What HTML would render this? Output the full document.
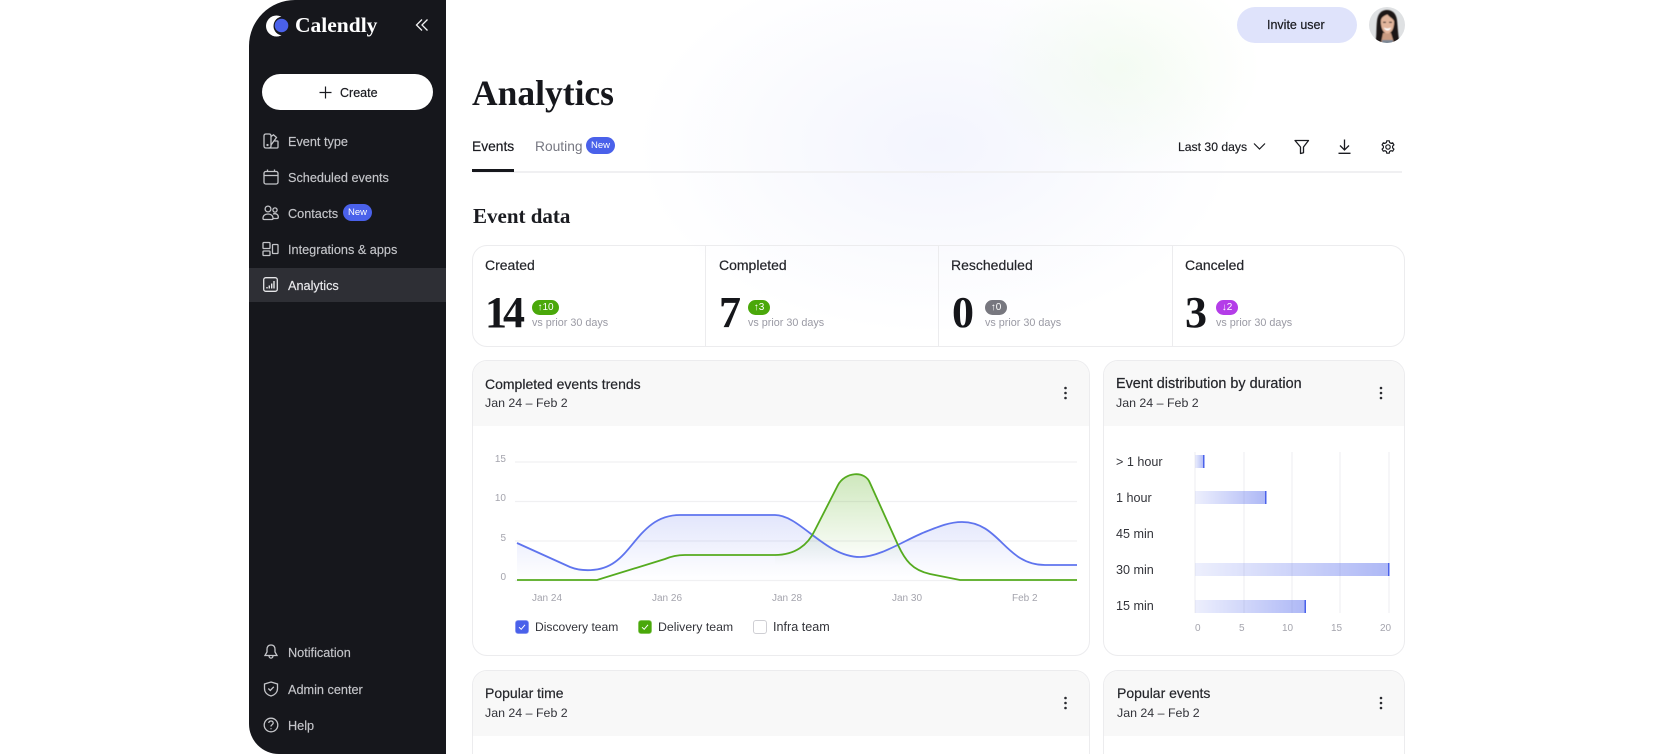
<!DOCTYPE html>
<html lang="en">
<head>
<meta charset="utf-8">
<title>Calendly Analytics</title>
<style>
html,body{margin:0;padding:0;background:#fff;width:1680px;height:754px;overflow:hidden}
#p{position:relative;width:1680px;height:754px;overflow:hidden;font-family:"Liberation Sans",sans-serif;color:#1a1b20}
.t{position:absolute;white-space:nowrap;line-height:20px;font-size:13.5px}
.s{font-family:"Liberation Serif",serif;font-weight:700}
.abs{position:absolute}
#side{position:absolute;left:249px;top:0;width:197px;height:754px;background:#16171c;border-radius:46px 0 0 30px}
.nav{color:#c4c5c9;font-size:12.7px;-webkit-text-stroke:.15px #c4c5c9;margin-top:.6px}
.badge{position:absolute;border-radius:9px;color:#fff;font-size:10px;line-height:15px;text-align:center}
.new{background:#4a61ea;height:17px;line-height:17px;width:29px}
.card{position:absolute;border:1px solid #ececee;border-radius:15px;box-sizing:border-box;background:#fff;overflow:hidden}
.head{position:absolute;left:0;right:0;top:0;height:65px;background:#f8f8f8}
.lab{font-size:14px;color:#25262b;-webkit-text-stroke:.2px #25262b}
.sub{font-size:12.8px;color:#33343a}
.ax{font-size:10px;color:#a4a4ad;margin-top:1px}
.vs{font-size:10.8px;color:#9a9aa4}
.up{height:15px}
svg{position:absolute;overflow:visible}
</style>
</head>
<body>
<div id="p">
<div class="abs" style="left:446px;top:0;width:1000px;height:754px;background:radial-gradient(ellipse 140px 105px at 675px 68px,rgba(232,249,226,.42),rgba(232,249,226,0) 100%),radial-gradient(ellipse 300px 190px at 490px 145px,rgba(232,235,252,.5),rgba(232,235,252,0) 100%)"></div>

<div id="side"></div>
<svg style="left:262px;top:12px" width="32" height="28" viewBox="0 0 32 28">
<circle cx="14.500" cy="14" r="10.500" fill="#fff"/>
<circle cx="21" cy="14" r="9.500" fill="#16171c"/>
<circle cx="19.500" cy="13.500" r="6.800" fill="#4a61ea"/>
</svg>
<span class="t s" style="left:295px;top:15px;font-size:21.500px;color:#fff;line-height:20px">Calendly</span>
<svg style="left:415px;top:18px" width="14" height="14" viewBox="0 0 14 14" fill="none" stroke="#f2f2f4" stroke-width="1.300"><path d="M7 1.500 1.500 7 7 12.500M12.500 1.500 7 7 12.500 12.500"/></svg>

<div class="abs" style="left:262px;top:74px;width:171px;height:36px;background:#fff;border-radius:18px"></div>
<svg style="left:319px;top:86px" width="13" height="13" viewBox="0 0 13 13" stroke="#1a1b20" stroke-width="1.200"><path d="M6.500 .5V12.500M.5 6.500H12.500"/></svg>
<span class="t" style="left:340px;top:83px;font-size:12.500px;-webkit-text-stroke:.2px #1a1b20">Create</span>

<svg style="left:263px;top:133px" width="16" height="16" viewBox="0 0 16 16" fill="none" stroke="#c4c5c9" stroke-width="1.300"><path d="M1 3Q1 1 3 1H6Q8 1 8 3V13Q8 15 6 15H3Q1 15 1 13Z"/><path d="M8 3.500 10.500 1.800 13.500 4.500 8 12M11.500 8H14.500Q15 8 15 9V14Q15 15 14 15H5.500"/><circle cx="4.500" cy="12" r=".5"/></svg>
<span class="t nav" style="left:288px;top:131px">Event type</span>
<svg style="left:263px;top:169px" width="16" height="16" viewBox="0 0 16 16" fill="none" stroke="#c4c5c9" stroke-width="1.300"><rect x="1" y="2.500" width="14" height="12.500" rx="1.800"/><path d="M1 6.500H15M4.500 .5V2.500M11.500 .5V2.500"/></svg>
<span class="t nav" style="left:288px;top:167px">Scheduled events</span>
<svg style="left:262px;top:205px" width="17" height="16" viewBox="0 0 17 16" fill="none" stroke="#c4c5c9" stroke-width="1.300"><circle cx="6" cy="4" r="2.900"/><circle cx="13" cy="5" r="2.100"/><path d="M1 13.500C1 10.500 3 9 6 9S11 10.500 11 13.500Q11 14.500 10 14.500H2Q1 14.500 1 13.500ZM11 9C14 8 16.300 9.500 16.300 12Q16.300 13.500 15 13.500H11.300"/></svg>
<span class="t nav" style="left:288px;top:203px">Contacts</span>
<div class="badge new" style="left:343px;top:204px;font-size:9.500px">New</div>
<svg style="left:262px;top:241px" width="17" height="16" viewBox="0 0 17 16" fill="none" stroke="#c4c5c9" stroke-width="1.300"><rect x="1" y="1.500" width="7" height="6" rx=".8"/><rect x="1" y="10" width="7" height="4.500" rx=".8"/><rect x="10.500" y="3.500" width="5.500" height="9" rx=".8"/></svg>
<span class="t nav" style="left:288px;top:239px">Integrations &amp; apps</span>
<div class="abs" style="left:249px;top:268px;width:197px;height:34px;background:#2e2f35"></div>
<svg style="left:263px;top:277px" width="15" height="15" viewBox="0 0 15 15" fill="none" stroke="#e6e6e9" stroke-width="1.300"><rect x=".7" y=".7" width="13.600" height="13.600" rx="2"/><path d="M4 11.500V10M6.300 11.500V8.500M8.700 11.500V6.500M11 11.500V4" stroke-width="1.400"/></svg>
<span class="t nav" style="left:288px;top:275px;color:#e9e9ec;-webkit-text-stroke:.15px #e9e9ec">Analytics</span>

<svg style="left:263px;top:644px" width="16" height="16" viewBox="0 0 16 16" fill="none" stroke="#c4c5c9" stroke-width="1.300"><path d="M8 1C5 1 4 3 4 5.500V8L2 11.500H14L12 8V5.500C12 3 11 1 8 1ZM6 11.500C6 15 10 15 10 11.500"/></svg>
<span class="t nav" style="left:288px;top:642px">Notification</span>
<svg style="left:263px;top:681px" width="16" height="16" viewBox="0 0 16 16" fill="none" stroke="#c4c5c9" stroke-width="1.300"><path d="M8 1 14.500 3V7.500C14.500 11.500 11.500 14 8 15 4.500 14 1.500 11.500 1.500 7.500V3ZM5.300 7.500 7.300 9.500 10.800 5.800"/></svg>
<span class="t nav" style="left:288px;top:679px">Admin center</span>
<svg style="left:263px;top:717px" width="16" height="16" viewBox="0 0 16 16" fill="none" stroke="#c4c5c9" stroke-width="1.300"><circle cx="8" cy="8" r="6.800"/><path d="M5.800 6C5.800 3.300 10.200 3.300 10.200 6 10.200 7.700 8 7.500 8 9.500M8 11.300V12.300"/></svg>
<span class="t nav" style="left:288px;top:715px">Help</span>

<div class="abs" style="left:1237px;top:7px;width:120px;height:36px;background:#dfe3fb;border-radius:18px"></div>
<span class="t" style="left:1267px;top:15px;font-size:12.500px;-webkit-text-stroke:.2px #1a1b20">Invite user</span>
<svg style="left:1369px;top:7px" width="36" height="36" viewBox="0 0 36 36">
<defs><clipPath id="av"><circle cx="18" cy="18" r="18"/></clipPath><filter id="bl"><feGaussianBlur stdDeviation=".4"/></filter></defs>
<g clip-path="url(#av)"><rect width="36" height="36" fill="#dfe1e3"/>
<g filter="url(#bl)"><path d="M6 36C8 30 7 22 8 14 9 6 13 3 18 3S27 6 28 13C29 22 29 30 31 36Z" fill="#1f1916"/>
<path d="M14 26H22L25 36H12Z" fill="#c99b82"/>
<path d="M12 13C13 9.500 16 8.500 18.500 7.500 20 10 23.500 11 25 14 25.500 20 23 26.500 18.500 26.500S11.500 20 12 13Z" fill="#e2b59c"/>
<path d="M14.800 20.500Q18.500 22.500 22 20.500 21 23.500 18.500 23.500T14.800 20.500Z" fill="#fff"/>
<rect x="14" y="14.800" width="3" height="1.100" fill="#2b1f1a"/><rect x="20" y="14.800" width="3" height="1.100" fill="#2b1f1a"/>
<rect x="13" y="33" width="11" height="5" fill="#7b8794"/></g></g></svg>

<span class="t s" style="left:472px;top:83px;font-size:35.500px;line-height:20px;color:#16171c">Analytics</span>
<span class="t" style="left:472px;top:137px;font-size:13.800px;-webkit-text-stroke:.2px #1a1b20">Events</span>
<span class="t" style="left:535px;top:137px;font-size:13.800px;color:#777882">Routing</span>
<div class="badge new" style="left:586px;top:137px;font-size:9.500px">New</div>
<div class="abs" style="left:473px;top:171px;width:929px;height:1.500px;background:#f0f0f2"></div>
<div class="abs" style="left:472px;top:169px;width:42px;height:3px;background:#16171c"></div>
<span class="t" style="left:1178px;top:137px;font-size:12.200px;-webkit-text-stroke:.15px #1a1b20">Last 30 days</span>
<svg style="left:1253px;top:142px" width="13" height="9" viewBox="0 0 13 9" fill="none" stroke="#1a1b20" stroke-width="1.200"><path d="M1 1.500 6.500 7 12 1.500"/></svg>
<svg style="left:1294px;top:139px" width="15" height="15" viewBox="0 0 15 15" fill="none" stroke="#1a1b20" stroke-width="1.300"><path d="M1 1.500H14.500L9.500 8V13.800L6.500 14.500V8Z" stroke-linejoin="round"/></svg>
<svg style="left:1338px;top:139px" width="13" height="15" viewBox="0 0 13 15" fill="none" stroke="#1a1b20" stroke-width="1.300"><path d="M6.500 .5V10.500M2 6.500 6.500 11 11 6.500M.5 14.300H12.500"/></svg>
<svg style="left:1381px;top:140px" width="14" height="14" viewBox="0 0 14 14" fill="none" stroke="#1a1b20" stroke-width="1.200"><path d="M5.800 .8H8.200L8.600 2.500 10 3.300 11.700 2.800 12.900 4.900 11.600 6.100V7.900L12.900 9.100 11.700 11.200 10 10.700 8.600 11.500 8.200 13.200H5.800L5.400 11.500 4 10.700 2.300 11.200 1.100 9.100 2.400 7.900V6.100L1.100 4.900 2.300 2.800 4 3.300 5.400 2.500Z"/><circle cx="7" cy="7" r="2.200"/></svg>

<span class="t s" style="left:473px;top:206px;font-size:21px;color:#1a1b20">Event data</span>

<div class="abs" style="left:472px;top:245px;width:933px;height:102px;border:1px solid #ececee;border-radius:15px;box-sizing:border-box"></div>
<div class="abs" style="left:705px;top:246px;width:1px;height:100px;background:#ececee"></div>
<div class="abs" style="left:938px;top:246px;width:1px;height:100px;background:#ececee"></div>
<div class="abs" style="left:1172px;top:246px;width:1px;height:100px;background:#ececee"></div>

<span class="t lab" style="left:485px;top:255px">Created</span>
<span class="t lab" style="left:719px;top:255px">Completed</span>
<span class="t lab" style="left:951px;top:255px">Rescheduled</span>
<span class="t lab" style="left:1185px;top:255px">Canceled</span>

<span class="t s" style="left:485px;top:303px;font-size:44px;line-height:20px;letter-spacing:-4px;color:#15161a">14</span>
<span class="t s" style="left:719px;top:303px;font-size:44px;line-height:20px;color:#15161a">7</span>
<span class="t s" style="left:952px;top:303px;font-size:44px;line-height:20px;color:#15161a">0</span>
<span class="t s" style="left:1185px;top:303px;font-size:44px;line-height:20px;color:#15161a">3</span>

<div class="badge up" style="left:532px;top:300px;width:27px;background:#4aa80a">↑10</div>
<div class="badge up" style="left:748px;top:300px;width:22px;background:#4aa80a">↑3</div>
<div class="badge up" style="left:985px;top:300px;width:22px;background:#77777f">↑0</div>
<div class="badge up" style="left:1216px;top:300px;width:22px;background:#b43de8">↓2</div>
<span class="t vs" style="left:532px;top:313px">vs prior 30 days</span>
<span class="t vs" style="left:748px;top:313px">vs prior 30 days</span>
<span class="t vs" style="left:985px;top:313px">vs prior 30 days</span>
<span class="t vs" style="left:1216px;top:313px">vs prior 30 days</span>

<div class="card" style="left:472px;top:360px;width:618px;height:296px"><div class="head"></div></div>
<div class="card" style="left:1103px;top:360px;width:302px;height:296px"><div class="head"></div></div>
<div class="card" style="left:472px;top:670px;width:618px;height:100px"><div class="head"></div></div>
<div class="card" style="left:1103px;top:670px;width:302px;height:100px"><div class="head"></div></div>

<span class="t lab" style="left:485px;top:374px;font-size:14px">Completed events trends</span>
<span class="t sub" style="left:485px;top:393px;font-size:12.400px">Jan 24 – Feb 2</span>
<span class="t lab" style="left:1116px;top:374px;font-size:14.400px">Event distribution by duration</span>
<span class="t sub" style="left:1116px;top:393px;font-size:12.400px">Jan 24 – Feb 2</span>
<span class="t lab" style="left:485px;top:683px">Popular time</span>
<span class="t sub" style="left:485px;top:703px;font-size:12.400px">Jan 24 – Feb 2</span>
<span class="t lab" style="left:1117px;top:683px">Popular events</span>
<span class="t sub" style="left:1117px;top:703px;font-size:12.400px">Jan 24 – Feb 2</span>

<svg style="left:0;top:0" width="1680" height="754" viewBox="0 0 1680 754">
<g fill="#2a2b30"><circle cx="1065.500" cy="388" r="1.300"/><circle cx="1065.500" cy="393" r="1.300"/><circle cx="1065.500" cy="398" r="1.300"/>
<circle cx="1381" cy="388" r="1.300"/><circle cx="1381" cy="393" r="1.300"/><circle cx="1381" cy="398" r="1.300"/>
<circle cx="1065.500" cy="698" r="1.300"/><circle cx="1065.500" cy="703" r="1.300"/><circle cx="1065.500" cy="708" r="1.300"/>
<circle cx="1381" cy="698" r="1.300"/><circle cx="1381" cy="703" r="1.300"/><circle cx="1381" cy="708" r="1.300"/></g>
<defs>
<linearGradient id="gb" x1="0" y1="515" x2="0" y2="580" gradientUnits="userSpaceOnUse"><stop offset="0" stop-color="#4a61ea" stop-opacity=".16"/><stop offset="1" stop-color="#4a61ea" stop-opacity="0"/></linearGradient>
<linearGradient id="gg" x1="0" y1="474" x2="0" y2="565" gradientUnits="userSpaceOnUse"><stop offset="0" stop-color="#4aa80a" stop-opacity=".27"/><stop offset="1" stop-color="#4aa80a" stop-opacity="0"/></linearGradient>
<linearGradient id="gh" x1="0" x2="1" y1="0" y2="0"><stop offset="0" stop-color="#4a61ea" stop-opacity=".1"/><stop offset="1" stop-color="#4a61ea" stop-opacity=".45"/></linearGradient>
</defs>
<g stroke="#f0f0f2" stroke-width="1.300"><path d="M515 462H1077M515 501.500H1077M515 541H1077M515 580.500H1077"/></g>
<path d="M517 543L570 567C580 571 600 573 615 562C635 548 645 515 680 515L775 515C800 515 825 557 860 557C880 557 905 540 925 532C940 526 950 522 962 522C1000 522 1005 565 1045 565L1077 565V580H517Z" fill="url(#gb)"/>
<path d="M775 555C795 555 808 545 815 530L838 485C845 472 865 470 870 483L898 545C905 560 912 570 930 574L945 578L775 578Z" fill="url(#gg)"/>
<path d="M517 543L570 567C580 571 600 573 615 562C635 548 645 515 680 515L775 515C800 515 825 557 860 557C880 557 905 540 925 532C940 526 950 522 962 522C1000 522 1005 565 1045 565L1077 565" fill="none" stroke="#5f74ee" stroke-width="1.800"/>
<path d="M517 580L597 580L665 559C672 556 678 555 685 555L775 555C795 555 808 545 815 530L838 485C845 472 865 470 870 483L898 545C905 560 912 570 930 574L960 580L1077 580" fill="none" stroke="#55ab1f" stroke-width="1.800"/>
<g stroke="#eeeef1"><path d="M1195 452V613M1244 452V613M1292 452V613M1340 452V613M1389 452V613"/></g>
<rect x="1195" y="455" width="9" height="13" fill="url(#gh)"/><rect x="1203" y="455" width="1.500" height="13" fill="#4a61ea"/>
<rect x="1195" y="491" width="71" height="13" fill="url(#gh)"/><rect x="1265" y="491" width="1.500" height="13" fill="#4a61ea"/>
<rect x="1195" y="563" width="194" height="13" fill="url(#gh)"/><rect x="1388" y="563" width="1.500" height="13" fill="#4a61ea"/>
<rect x="1195" y="600" width="111" height="13" fill="url(#gh)"/><rect x="1304.500" y="600" width="1.500" height="13" fill="#4a61ea"/>
<rect x="515.500" y="620.500" width="13" height="13" rx="2.500" fill="#4a61ea" stroke="#7f8ff0" stroke-width=".7"/>
<path d="M519 627.200 521.200 629.300 525 624.800" fill="none" stroke="#fff" stroke-width="1"/>
<rect x="638.500" y="620.500" width="13" height="13" rx="2.500" fill="#4aa80a" stroke="#7cc24f" stroke-width=".7"/>
<path d="M642 627.200 644.200 629.300 648 624.800" fill="none" stroke="#fff" stroke-width="1"/>
<rect x="753.500" y="620.500" width="13" height="13" rx="2.500" fill="#fff" stroke="#cfcfd4"/>
</svg>

<span class="t ax" style="left:494px;top:449px;width:12px;text-align:right">15</span>
<span class="t ax" style="left:494px;top:488px;width:12px;text-align:right">10</span>
<span class="t ax" style="left:494px;top:528px;width:12px;text-align:right">5</span>
<span class="t ax" style="left:494px;top:567px;width:12px;text-align:right">0</span>
<span class="t ax" style="left:532px;top:588px">Jan 24</span>
<span class="t ax" style="left:652px;top:588px">Jan 26</span>
<span class="t ax" style="left:772px;top:588px">Jan 28</span>
<span class="t ax" style="left:892px;top:588px">Jan 30</span>
<span class="t ax" style="left:1012px;top:588px">Feb 2</span>

<span class="t" style="left:535px;top:617px;font-size:12.100px;color:#33343a">Discovery team</span>
<span class="t" style="left:658px;top:617px;font-size:12.300px;color:#33343a">Delivery team</span>
<span class="t" style="left:773px;top:617px;font-size:12.600px;color:#33343a">Infra team</span>

<span class="t sub" style="left:1116px;top:452px;font-size:12.600px">&gt; 1 hour</span>
<span class="t sub" style="left:1116px;top:488px;font-size:12.600px">1 hour</span>
<span class="t sub" style="left:1116px;top:524px;font-size:12.600px">45 min</span>
<span class="t sub" style="left:1116px;top:560px;font-size:12.600px">30 min</span>
<span class="t sub" style="left:1116px;top:596px;font-size:12.600px">15 min</span>
<span class="t ax" style="left:1195px;top:618px">0</span>
<span class="t ax" style="left:1239px;top:618px">5</span>
<span class="t ax" style="left:1282px;top:618px">10</span>
<span class="t ax" style="left:1331px;top:618px">15</span>
<span class="t ax" style="left:1380px;top:618px">20</span>
</div>
</body>
</html>
